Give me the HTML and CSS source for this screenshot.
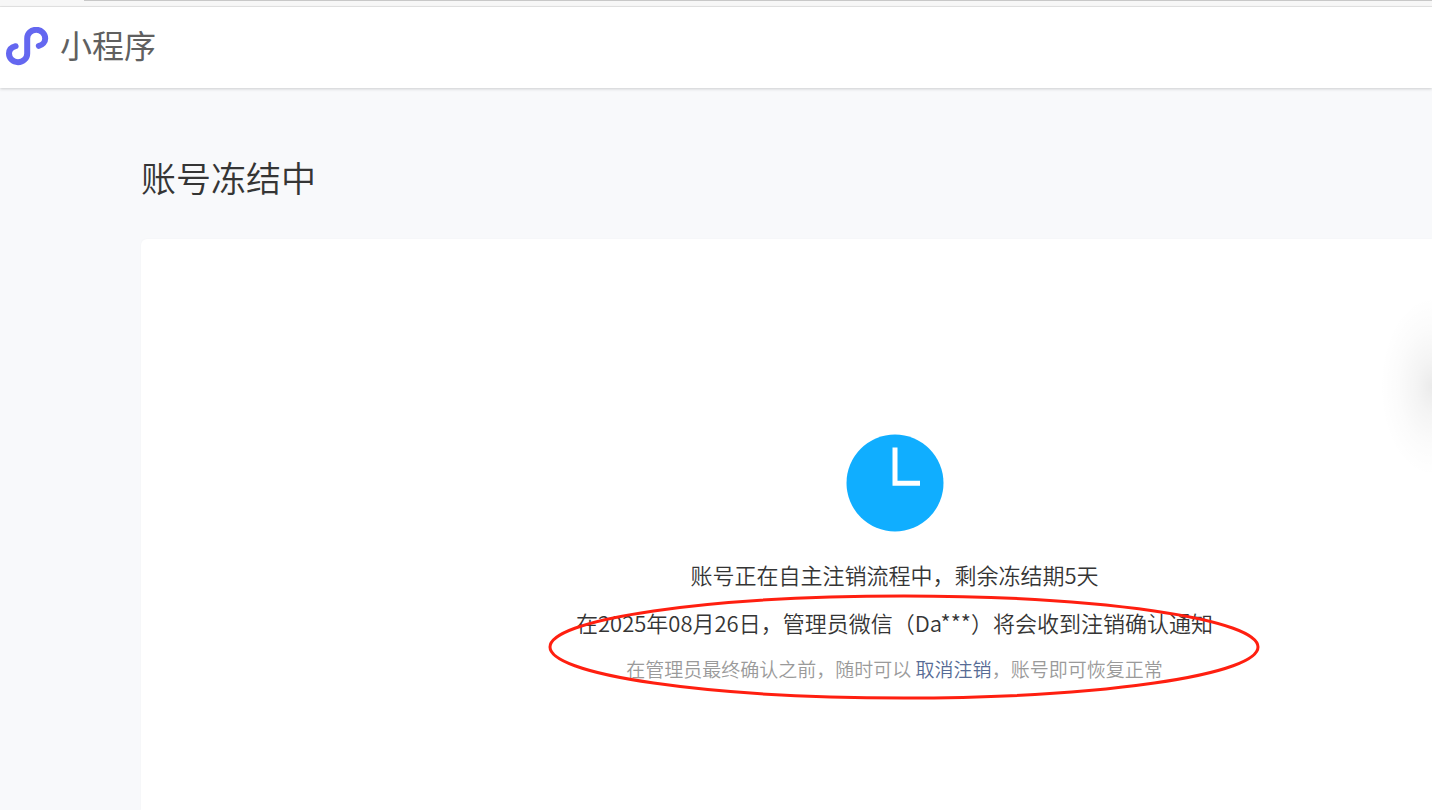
FILE: index.html
```html
<!DOCTYPE html>
<html lang="zh-CN">
<head>
<meta charset="utf-8">
<meta name="viewport" content="width=device-width, initial-scale=1">
<title>小程序</title>
<link rel="stylesheet" href="styles.css">
</head>
<body class="page">
<div class="strip"></div>
<header class="header">
  <svg class="logo" viewBox="0 0 44 40" aria-hidden="true">
    <path d="M10.600 19.200C6.500 20.200 4 23 4 26.600C4 31.400 8 35.200 13 35.200C18 35.200 22.200 31.400 22.200 26.400V11.400C22.200 6.400 26.200 2.800 31.200 2.800C36.200 2.800 40.200 6.600 40.200 11.400C40.200 15 37.600 18 33.800 18.900"/>
  </svg>
  <span class="brand">小程序</span>
</header>
<main class="main">
  <h1 class="title">账号冻结中</h1>
  <section class="card">
    <svg class="clock" viewBox="0 0 98 98" aria-hidden="true">
      <circle class="clock-face" cx="49" cy="49" r="48.500"/>
      <path class="clock-hands" d="M49 13.500V49.300H74"/>
    </svg>
    <div class="message">
      <p class="lead">账号正在自主注销流程中，剩余冻结期5天</p>
      <p class="lead">在2025年08月26日，管理员微信（Da***）将会收到注销确认通知</p>
      <p class="note">在管理员最终确认之前，随时可以 <a class="link" href="#">取消注销</a>，账号即可恢复正常</p>
      <svg class="marker" viewBox="0 0 712 106" aria-hidden="true">
        <ellipse cx="356" cy="53" rx="354" ry="51"/>
      </svg>
    </div>
  </section>
</main>
<div class="side-glow"></div>
</body>
</html>
```
FILE: styles.css
```css
* {
  box-sizing: border-box;
}

.page {
  position: relative;
  display: flex;
  flex-direction: column;
  min-height: 100vh;
  margin: 0;
  background: #f8f9fb;
  color: #353535;
  font-family: "Noto Sans CJK SC", sans-serif;
  font-weight: 350;
}

.strip {
  height: 7px;
  padding-left: 84px;
  background: #f7f7f7;
  border-bottom: 1px solid #e6e6e6;
}

.strip::before {
  content: "";
  display: block;
  height: 1px;
  background: #c8c8c8;
}

.header {
  display: flex;
  align-items: center;
  gap: 11px;
  height: 81px;
  padding: 0 5px 1px;
  background: #fff;
  box-shadow: 0 1px 3px rgba(0, 0, 0, 0.18);
}

.logo {
  width: 44px;
  height: 40px;
  fill: none;
  stroke: #6467f0;
  stroke-width: 6;
  stroke-linecap: round;
}

.brand {
  padding-bottom: 6px;
  color: #606060;
  font-size: 32px;
  line-height: 40px;
  font-weight: 400;
}

.main {
  display: flex;
  flex: 1;
  flex-direction: column;
  padding-left: 141px;
}

.title {
  margin: 64px 0 37px;
  font-size: 35px;
  line-height: 50px;
  font-weight: 350;
}

.card {
  display: flex;
  flex: 1;
  flex-direction: column;
  align-items: center;
  gap: 18px;
  padding: 195px 0 80px 216px;
  background: #fff;
  border-radius: 6px 0 0 0;
  box-shadow: 0 0 2px rgba(0, 0, 0, 0.04);
}

.clock {
  width: 98px;
  height: 98px;
}

.clock-face {
  fill: #10aeff;
}

.clock-hands {
  fill: none;
  stroke: #fff;
  stroke-width: 5;
}

.message {
  position: relative;
  text-align: center;
  white-space: nowrap;
}

.lead {
  margin: 0;
  font-size: 22px;
  line-height: 48px;
}

.note {
  margin: 0;
  color: #9a9a9a;
  font-size: 19px;
  line-height: 46px;
}

.link {
  color: #576b95;
  text-decoration: none;
}

.marker {
  position: absolute;
  top: 44px;
  left: calc(50% - 347px);
  width: 712px;
  height: 106px;
  fill: none;
  stroke: #ff1f10;
  stroke-width: 3;
  pointer-events: none;
}

.side-glow {
  position: absolute;
  top: 300px;
  right: 0;
  width: 52px;
  height: 180px;
  background: radial-gradient(ellipse 52px 90px at 100% 48%, rgba(0, 0, 0, 0.08), rgba(0, 0, 0, 0.045) 30%, rgba(0, 0, 0, 0.015) 65%, transparent);
  pointer-events: none;
}
```
